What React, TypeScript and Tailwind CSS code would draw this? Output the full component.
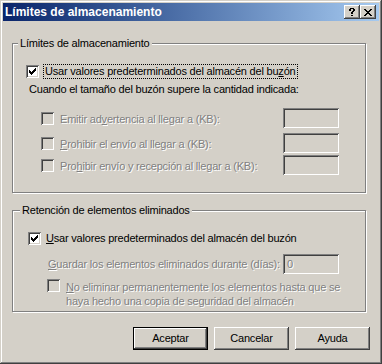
import React from 'react';

function Pix({ rows, color = '#000000' }: { rows: string[]; color?: string }) {
  const w = rows[0].length;
  const h = rows.length;
  let d = '';
  rows.forEach((r, y) => {
    r.split('').forEach((c, x) => {
      if (c === 'X') d += `M${x} ${y}h1v1h-1z`;
    });
  });
  return (
    <svg width={w} height={h} viewBox={`0 0 ${w} ${h}`} shapeRendering="crispEdges" className="block">
      <path d={d} fill={color} />
    </svg>
  );
}

const CHECK = [
  '......X',
  '.....XX',
  'X...XXX',
  'XX.XXX.',
  'XXXXX..',
  '.XXX...',
  '..X....',
];

const CLOSE = [
  'XX....XX',
  '.XX..XX.',
  '..XXXX..',
  '...XX...',
  '..XXXX..',
  '.XX..XX.',
  'XX....XX',
];

const HELP = [
  '.XXXX.',
  'XX..XX',
  'XX..XX',
  '...XX.',
  '..XX..',
  '..XX..',
  '......',
  '..XX..',
];

const SUNKEN =
  'shadow-[inset_1px_1px_0_#808080,inset_-1px_-1px_0_#ffffff,inset_2px_2px_0_#404040,inset_-2px_-2px_0_#d4d0c8]';
const RAISED =
  'shadow-[inset_-1px_-1px_0_#404040,inset_1px_1px_0_#ffffff,inset_-2px_-2px_0_#808080,inset_2px_2px_0_#d4d0c8]';
const DIS = 'text-[#808080] [text-shadow:1px_1px_0_#ffffff]';

function Check({ checked = false, disabled = false }: { checked?: boolean; disabled?: boolean }) {
  return (
    <span
      className={`flex shrink-0 w-[13px] h-[13px] pl-[3px] pt-[3px] ${disabled ? 'bg-[#d4d0c8]' : 'bg-white'} ${SUNKEN}`}
    >
      {checked && <Pix rows={CHECK} />}
    </span>
  );
}

function TextBox({ value = '' }: { value?: string }) {
  return (
    <div className={`flex items-center w-[56px] h-[20px] pl-[4px] bg-[#d4d0c8] ${SUNKEN}`}>
      {value && <span className={DIS}>{value}</span>}
    </div>
  );
}

function Row({ label, className = '' }: { label: React.ReactNode; className?: string }) {
  return (
    <div className={`flex items-center h-[20px] ${className}`}>
      <div className="w-[242px] flex items-center">
        <Check disabled />
        <span className={`ml-[6px] mt-[2px] ${DIS}`}>{label}</span>
      </div>
      <TextBox />
    </div>
  );
}

function Btn({ children, def = false }: { children: React.ReactNode; def?: boolean }) {
  return (
    <button
      className={`w-[75px] h-[23px] flex items-center justify-center bg-[#d4d0c8] text-black ${def ? 'border border-black' : ''} ${RAISED}`}
    >
      {children}
    </button>
  );
}

function TitleBtn({ children }: { children: React.ReactNode }) {
  return (
    <div className={`w-[16px] h-[14px] flex items-center justify-center bg-[#d4d0c8] ${RAISED}`}>{children}</div>
  );
}

export default function App() {
  return (
    <div className="w-[382px] h-[364px] bg-[#d4d0c8] p-[3px] flex flex-col shadow-[inset_-1px_-1px_0_#404040,inset_1px_1px_0_#d4d0c8,inset_-2px_-2px_0_#808080,inset_2px_2px_0_#ffffff] font-['Liberation_Sans',Arial,sans-serif] text-[11px] leading-[13px] tracking-[-0.2px] text-black">
      <div className="h-[18px] shrink-0 flex items-center justify-between pl-[2px] pr-[3px] bg-linear-to-r from-[#0a246a] to-[#a6caf0]">
        <span className="text-white font-bold text-[12px] tracking-[0px]">Límites de almacenamiento</span>
        <div className="flex">
          <TitleBtn>
            <Pix rows={HELP} />
          </TitleBtn>
          <TitleBtn>
            <Pix rows={CLOSE} />
          </TitleBtn>
        </div>
      </div>

      <div className="flex flex-col px-[9px]">
        <fieldset className="mt-[16px] w-[354px] border border-[#808080] shadow-[inset_1px_1px_0_#ffffff,1px_1px_0_#ffffff]">
          <legend className="ml-[5px] px-[2px] bg-[#d4d0c8]">Límites de almacenamiento</legend>
          <div className="flex flex-col pl-[13px] pt-[14px] pb-[17px]">
            <div className="flex items-center h-[15px]">
              <Check checked />
              <span className="ml-[4px] px-[1px] h-[15px] border border-dotted border-black leading-[13px]">
                Usar valores predeterminados del almacén del bu<u>z</u>ón
              </span>
            </div>
            <div className="mt-[4px] ml-[3px]">Cuando el tamaño del buzón supere la cantidad indicada:</div>
            <div className="flex flex-col ml-[15px] mt-[12px]">
              <Row
                label={
                  <>
                    Emitir ad<u>v</u>ertencia al llegar a (KB):
                  </>
                }
              />
              <Row
                className="mt-[5px]"
                label={
                  <>
                    <u>P</u>rohibir el envío al llegar a (KB):
                  </>
                }
              />
              <Row
                className="mt-[2px]"
                label={
                  <>
                    Pro<u>h</u>ibir envío y recepción al llegar a (KB):
                  </>
                }
              />
            </div>
          </div>
        </fieldset>

        <fieldset className="mt-[11px] w-[354px] border border-[#808080] shadow-[inset_1px_1px_0_#ffffff,1px_1px_0_#ffffff]">
          <legend className="ml-[7px] px-[2px] bg-[#d4d0c8]">Retención de elementos eliminados</legend>
          <div className="flex flex-col pl-[15px] pt-[14px] pb-[3px]">
            <div className="flex items-center h-[15px]">
              <Check checked />
              <span className="ml-[5px]">
                <u>U</u>sar valores predeterminados del almacén del buzón
              </span>
            </div>
            <div className="flex items-center h-[20px] mt-[8px]">
              <span className={`ml-[20px] w-[235px] ${DIS}`}>
                <u>G</u>uardar los elementos eliminados durante (días):
              </span>
              <TextBox value="0" />
            </div>
            <div className="flex items-start mt-[5px] ml-[19px]">
              <Check disabled />
              <span className={`ml-[6px] mt-[1px] leading-[14px] ${DIS}`}>
                <u>N</u>o eliminar permanentemente los elementos hasta que se
                <br />
                haya hecho una copia de seguridad del almacén
              </span>
            </div>
          </div>
        </fieldset>

        <div className="flex justify-end gap-[6px] mt-[15px]">
          <Btn def>Aceptar</Btn>
          <Btn>Cancelar</Btn>
          <Btn>Ayuda</Btn>
        </div>
      </div>
    </div>
  );
}
